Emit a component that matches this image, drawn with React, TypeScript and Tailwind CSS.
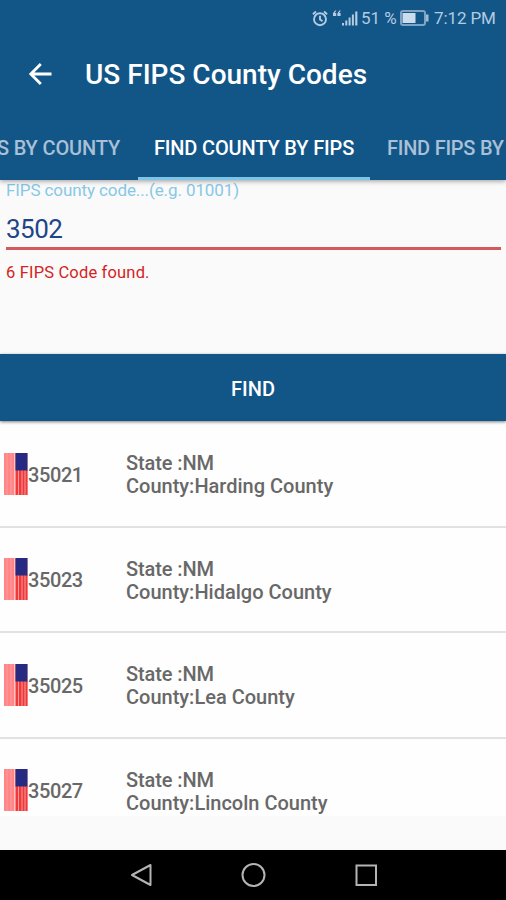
interface County {
  fips: string
  state: string
  name: string
}

const counties: County[] = [
  { fips: '35021', state: 'NM', name: 'Harding County' },
  { fips: '35023', state: 'NM', name: 'Hidalgo County' },
  { fips: '35025', state: 'NM', name: 'Lea County' },
  { fips: '35027', state: 'NM', name: 'Lincoln County' },
]

function StatusBar() {
  return (
    <div className="flex h-9 items-center pl-[312px] text-[#b4cbe0]">
      <svg className="shrink-0" width="16" height="17" viewBox="0 0 16 17" fill="none" stroke="currentColor" strokeWidth="1.9">
        <circle cx="8" cy="9.2" r="6" />
        <path d="M8 5.8v3.700l2.500 1.600M.9 4.2 4 1.500M15.100 4.200 12 1.500" />
      </svg>
      <svg className="ml-1 shrink-0" width="29" height="18" viewBox="0 0 29 18" fill="currentColor">
        <path d="M4.400 1.500 2.800 4h1.400v3H1V4.200L3 1.500zM8.800 1.500 7.200 4h1.400v3H5.400V4.200l2-2.700z" />
        <path d="M10 14h2v2.500h-2zM13.300 11.500h2v5h-2zM16.600 8.500h2v8h-2zM19.900 5.500h2v11h-2zM23.200 2.500h2.200v14h-2.200z" />
      </svg>
      <span className="w-[39px] shrink-0 whitespace-nowrap text-[17px] leading-none">51 %</span>
      <svg className="shrink-0" width="29" height="16" viewBox="0 0 29 16">
        <rect x="1" y="1" width="24" height="14" rx="2" fill="none" stroke="#7fa3c4" strokeWidth="2" />
        <rect x="2.500" y="3" width="13" height="10" fill="#cbdcec" />
        <path d="M26 4.500h2.500v7H26z" fill="#a3bdd6" />
      </svg>
      <span className="ml-[5px] whitespace-nowrap text-[17px] leading-none tracking-[-0.1px]">7:12 PM</span>
    </div>
  )
}

function Header() {
  return (
    <header className="relative z-10 h-[180px] shrink-0 bg-[#125688] shadow-[0_1px_5px_rgba(0,0,0,0.4)]">
      <StatusBar />
      <div className="flex h-[78px] items-center pl-7">
        <svg className="-mt-[3px]" width="24" height="24" viewBox="0 0 24 24" fill="none" stroke="#fff" strokeWidth="2.8">
          <path d="M23.500 12H3M12.800 2 2.800 12l10 10" />
        </svg>
        <h1 className="ml-[33px] whitespace-nowrap text-[28px] font-medium leading-none text-white">
          US FIPS County Codes
        </h1>
      </div>
      <nav className="flex h-[66px] whitespace-nowrap text-[20px] font-medium tracking-[-0.15px] text-[#a9c0d6]">
        <div className="flex w-[138px] shrink-0 justify-end pr-[18px]">
          <span className="leading-[68px]">S BY COUNTY</span>
        </div>
        <div className="w-[232px] shrink-0 border-b-[3px] border-[#7cc5e6] text-center text-white">
          <span className="leading-[68px]">FIND COUNTY BY FIPS</span>
        </div>
        <div className="shrink-0 pl-[17px]">
          <span className="leading-[68px] tracking-[-0.25px]">FIND FIPS BY</span>
        </div>
      </nav>
    </header>
  )
}

function SearchForm() {
  return (
    <section className="h-[174px] shrink-0 bg-[#fafafa] pl-[6px] pr-[5px]">
      <label className="block h-[20px] text-[17px] leading-[20px] tracking-[-0.1px] text-[#86c8e6]">
        FIPS county code...(e.g. 01001)
      </label>
      <div className="h-[50px] border-b-[3px] border-[#d05a5c] text-[26px] leading-[58px] tracking-[-0.5px] text-[#1d4587]">
        3502
      </div>
      <p className="text-[16.500px] leading-[45px] tracking-[0.17px] text-[#d32323]">6 FIPS Code found.</p>
    </section>
  )
}

function Flag() {
  return (
    <svg className="shrink-0" width="24" height="42" viewBox="0 0 24 42">
      <rect width="23.500" height="42" fill="#ff8587" />
      <path d="M3 0v42M7 0v42" stroke="#ff9c9c" strokeWidth="1" />
      <path d="M10.500 0v42" stroke="#ffc4c4" strokeWidth="1" />
      <rect x="12" y="17" width="11.500" height="25" fill="#ef3a3c" />
      <path d="M14.500 17v25M18 17v25M21 17v25" stroke="#ffb0b0" strokeWidth=".8" />
      <rect x="11.500" width="12" height="17.500" fill="#262a80" />
    </svg>
  )
}

function CountyRow({ county }: { county: County }) {
  return (
    <li className="flex h-[105.500px] items-center border-b-2 border-[#e2e2e2] pl-1 text-[20px] font-medium text-[#686868] last:border-transparent">
      <Flag />
      <span className="w-[98px] pt-[2px] tracking-[-0.4px]">{county.fips}</span>
      <div className="whitespace-nowrap pt-[3px] leading-[23px]">
        <p className="tracking-[-0.1px]">State :{county.state}</p>
        <p>County:{county.name}</p>
      </div>
    </li>
  )
}

function NavigationBar() {
  return (
    <footer className="flex h-[50px] items-center justify-center bg-black">
      <svg width="250" height="26" viewBox="0 0 250 26" fill="none" stroke="#b4b4b4" strokeWidth="2">
        <path d="M22.500 3v20L4 13z" strokeLinejoin="round" />
        <circle cx="125.500" cy="13" r="11" />
        <rect x="228.500" y="3.500" width="19.500" height="19.500" />
      </svg>
    </footer>
  )
}

export default function App() {
  return (
    <div className="flex h-[900px] w-[506px] flex-col overflow-hidden bg-[#fafafa] font-[Roboto,sans-serif]">
      <Header />
      <SearchForm />
      <button className="relative h-[67px] w-full shrink-0 bg-[#125688] pt-[2px] text-[20px] font-medium text-white shadow-[0_1px_3px_rgba(0,0,0,0.5)]">
        FIND
      </button>
      <ul className="h-[395px] shrink-0 overflow-hidden bg-[#fefefe] pt-[1px]">
        {counties.map((county) => (
          <CountyRow key={county.fips} county={county} />
        ))}
      </ul>
      <div className="flex-1" />
      <NavigationBar />
    </div>
  )
}
